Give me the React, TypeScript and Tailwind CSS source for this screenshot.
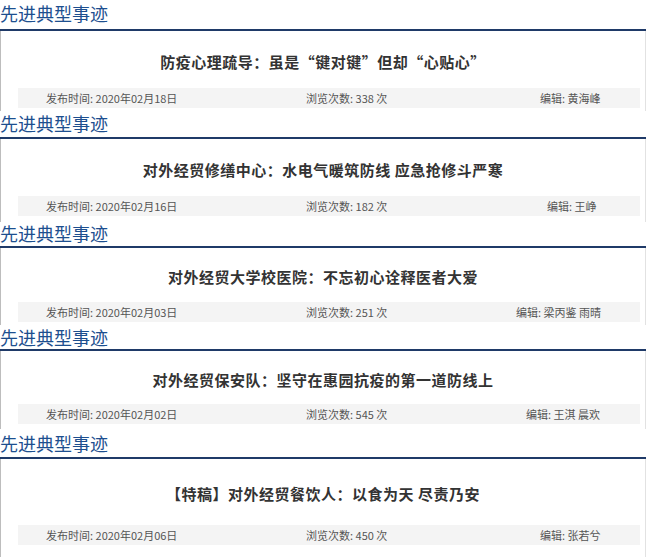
const cjk = { fontFamily: '"Noto Sans CJK SC", "Microsoft YaHei", sans-serif' };

interface Article {
  title: string;
  date: string;
  views: number;
  editor: string;
  headPad: string;
  headH: string;
  titlePad: string;
  gap: string;
  bottom: string;
  editorCol: string;
}

const articles: Article[] = [
  {
    title: '防疫心理疏导：虽是“键对键”但却“心贴心”',
    date: '2020年02月18日',
    views: 338,
    editor: '黄海峰',
    headPad: 'pt-[3px]',
    headH: 'h-[29px]',
    titlePad: 'pt-[21px]',
    gap: 'mt-[16px]',
    bottom: 'pb-[3px]',
    editorCol: 'w-[234px]',
  },
  {
    title: '对外经贸修缮中心：水电气暖筑防线 应急抢修斗严寒',
    date: '2020年02月16日',
    views: 182,
    editor: '王峥',
    headPad: 'pt-[2px]',
    headH: 'h-[26px]',
    titlePad: 'pt-[21px]',
    gap: 'mt-[16px]',
    bottom: 'pb-[6px]',
    editorCol: 'w-[241px]',
  },
  {
    title: '对外经贸大学校医院：不忘初心诠释医者大爱',
    date: '2020年02月03日',
    views: 251,
    editor: '梁丙鉴 雨晴',
    headPad: 'pt-[1px]',
    headH: 'h-[24px]',
    titlePad: 'pt-[19px]',
    gap: 'mt-[15px]',
    bottom: 'pb-[3px]',
    editorCol: 'w-[210px]',
  },
  {
    title: '对外经贸保安队：坚守在惠园抗疫的第一道防线上',
    date: '2020年02月02日',
    views: 545,
    editor: '王淇 晨欢',
    headPad: 'pt-[2px]',
    headH: 'h-[24px]',
    titlePad: 'pt-[19px]',
    gap: 'mt-[14px]',
    bottom: 'pb-[5px]',
    editorCol: 'w-[220px]',
  },
  {
    title: '【特稿】对外经贸餐饮人：以食为天 尽责乃安',
    date: '2020年02月06日',
    views: 450,
    editor: '张若兮',
    headPad: 'pt-[4px]',
    headH: 'h-[28px]',
    titlePad: 'pt-[25px]',
    gap: 'mt-[21px]',
    bottom: 'pb-[12px]',
    editorCol: 'w-[234px]',
  },
];

function Block({ a }: { a: Article }) {
  return (
    <div className="bg-white">
      {/* Header */}
      <div className={`${a.headH} ${a.headPad}`}>
        <span className="text-[18px] leading-[20px] text-[#1d4f8f] block">先进典型事迹</span>
      </div>
      <div className="h-[2px] bg-[#1f3a68]" />

      {/* Body */}
      <div className={`border-l border-r border-l-[#bdbdbd] border-r-[#e2e2e2] ${a.bottom}`}>
        <div className={`${a.titlePad} text-center`}>
          <h3 className="text-[15px] leading-[20px] font-bold text-[#333] tracking-[0.5px]">{a.title}</h3>
        </div>
        <div className={`${a.gap} ml-[17px] mr-[5px] h-[20px] bg-[#f4f4f4] flex items-center text-[11px] text-[#555]`}>
          <span className="pl-[28px] w-[288px] shrink-0">发布时间: {a.date}</span>
          <span className={`${a.editorCol} shrink-0`}>浏览次数: {a.views} 次</span>
          <span>编辑: {a.editor}</span>
        </div>
      </div>
    </div>
  );
}

export default function App() {
  return (
    <div className="w-[646px] h-[557px] overflow-hidden bg-white flex flex-col" style={cjk}>
      {articles.map((a, i) => (
        <Block key={i} a={a} />
      ))}
    </div>
  );
}
